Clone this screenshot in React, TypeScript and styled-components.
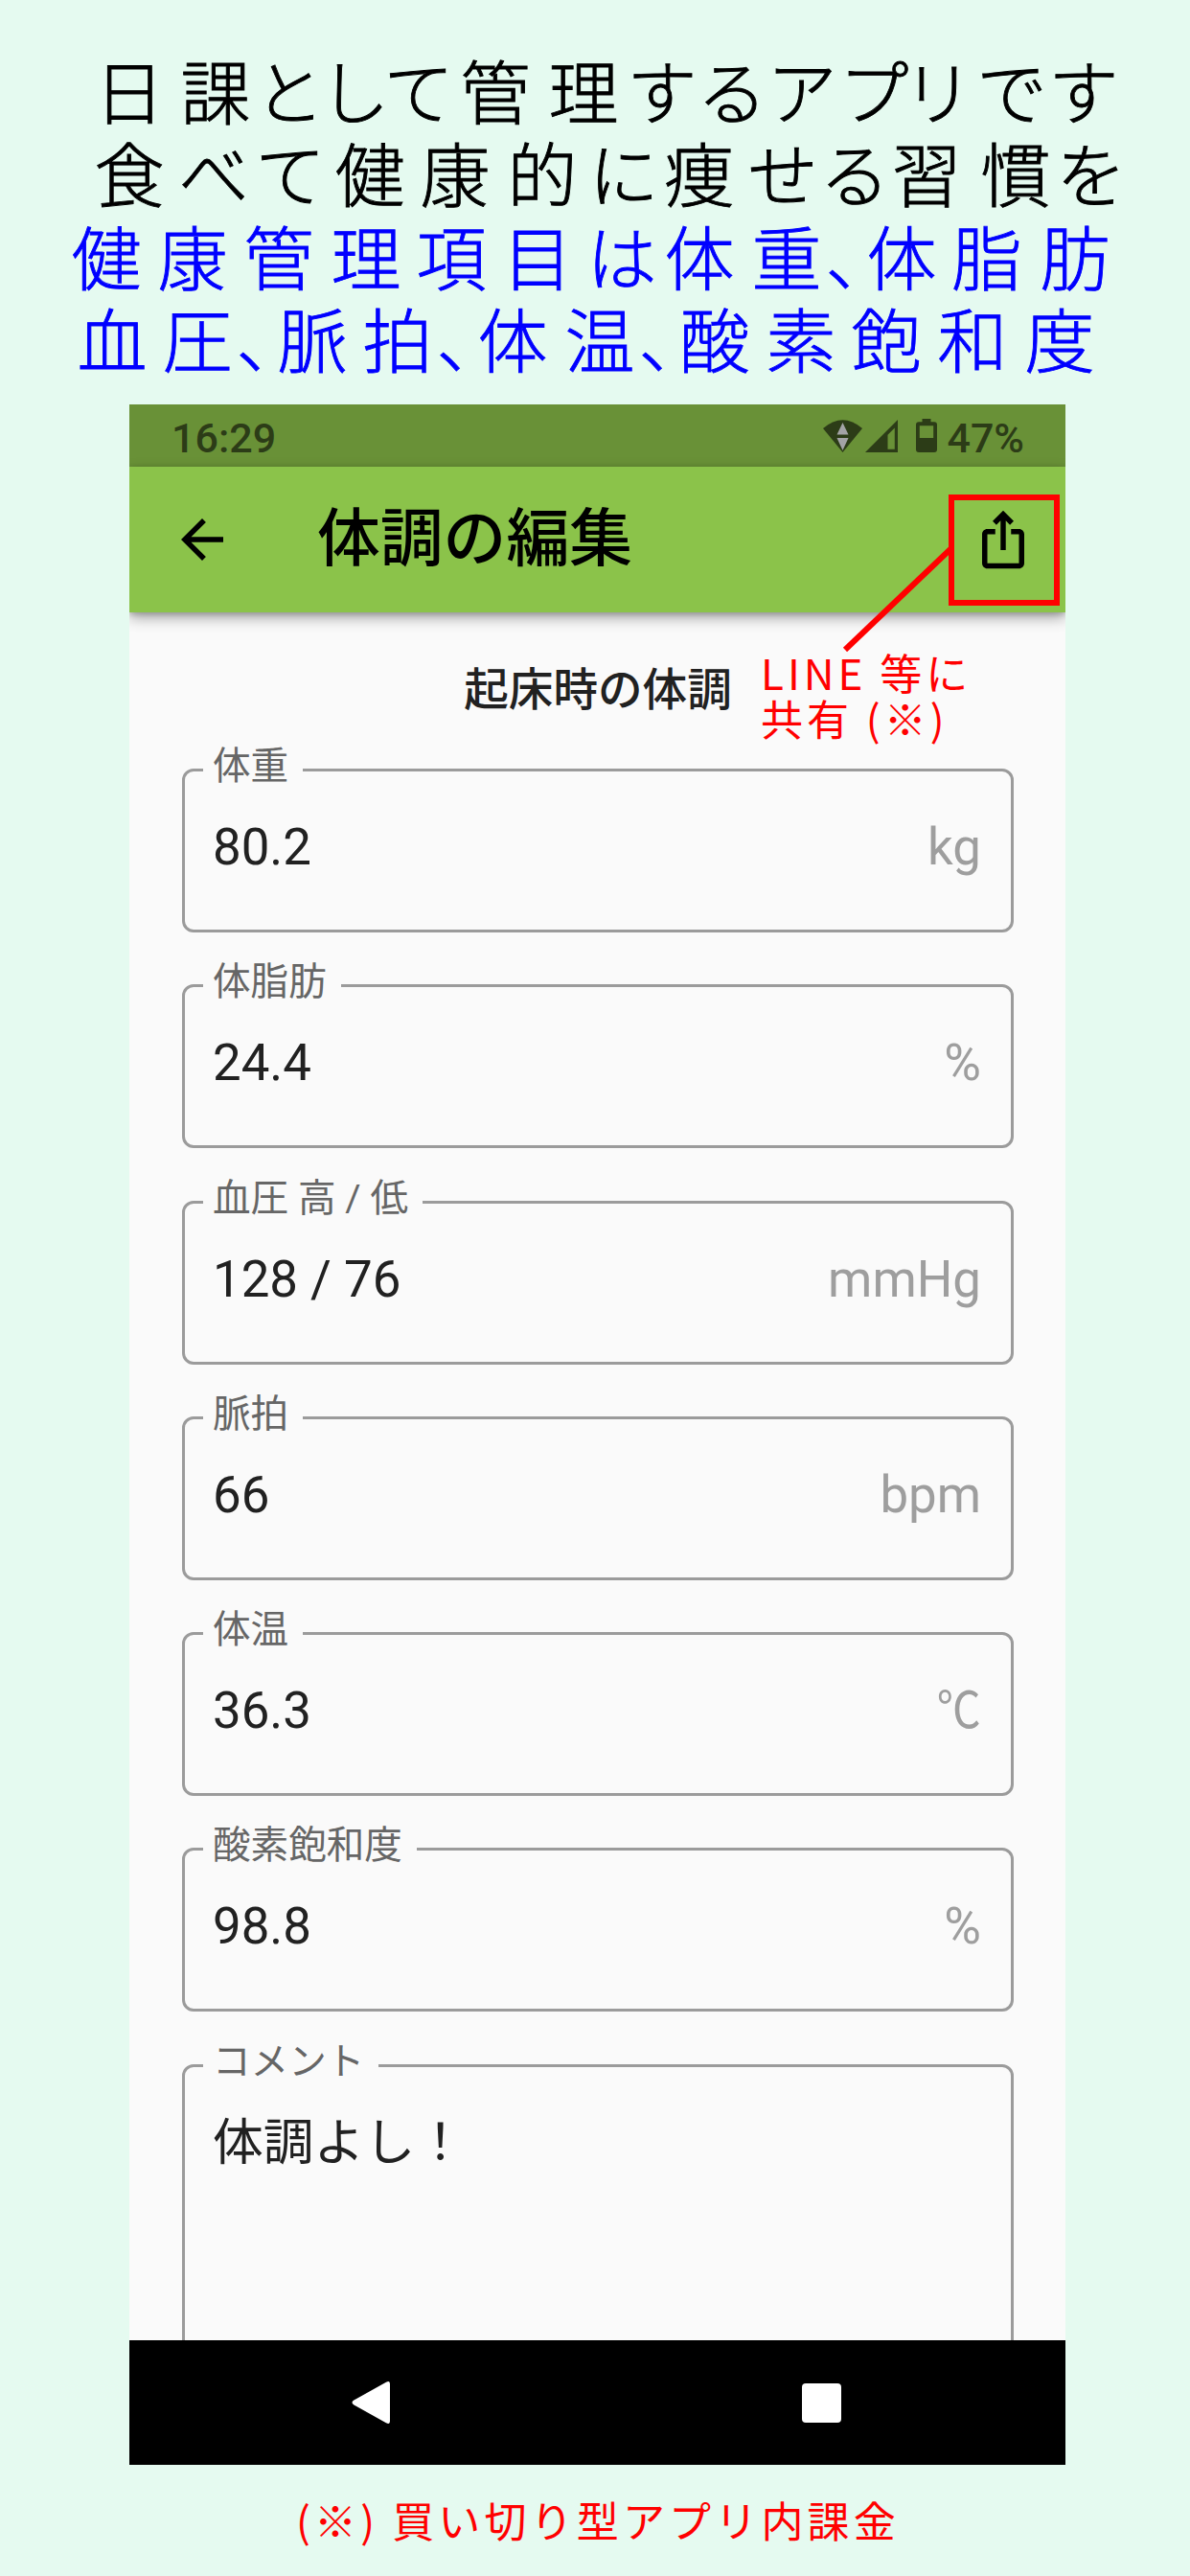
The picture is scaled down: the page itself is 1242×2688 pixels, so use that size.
import React from "react";
import styled, { createGlobalStyle } from "styled-components";

const CJK = '"Noto Sans CJK JP", sans-serif';
const UI = 'Roboto, "Noto Sans CJK JP", sans-serif';

const GlobalStyle = createGlobalStyle`
  * { box-sizing: border-box; }
  body { margin: 0; background: #e5faf0; }
`;

const Page = styled.div`
  width: 1242px;
  height: 2688px;
  overflow: hidden;
  display: flex;
  flex-direction: column;
  background: #e5faf0;
`;

/* ---------- headline ---------- */

const GLYPH = 73;

const Headline = styled.header`
  height: 422px;
  padding-top: 56px;
  flex: none;
`;

const HeadlineRow = styled.p<{ $color: string }>`
  margin: 0;
  height: 86.4px;
  line-height: 86.4px;
  white-space: nowrap;
  font-family: ${UI};
  font-weight: 300;
  font-size: ${GLYPH}px;
  font-feature-settings: "halt";
  color: ${(p) => p.$color};
  -webkit-text-stroke: 0.9px ${(p) => p.$color};
`;

const Glyph = styled.span<{ $gap: number }>`
  margin-left: ${(p) => p.$gap}px;
`;

interface HeadlineLine {
  text: string;
  color: string;
  centers: number[];
}

const HEADLINES: HeadlineLine[] = [
  {
    text: "日課として管理するアプリです",
    color: "#000000",
    centers: [135, 225, 302, 370, 437, 517, 609, 691, 764, 837, 912, 979, 1056, 1131],
  },
  {
    text: "食べて健康的に痩せる習慣を",
    color: "#000000",
    centers: [135, 223, 303, 386, 475, 566, 651, 730, 817, 892, 967, 1060, 1139],
  },
  {
    text: "健康管理項目は体重、体脂肪",
    color: "#0000ff",
    centers: [111, 201, 291, 382, 471, 561, 649, 730, 821, 898, 941, 1030, 1122],
  },
  {
    text: "血圧、脈拍、体温、酸素飽和度",
    color: "#0000ff",
    centers: [117, 206, 283, 326, 415, 492, 535, 626, 703, 746, 836, 925, 1015, 1106],
  },
];

// The comma is set half-width, every other glyph takes a full em.
const advance = (ch: string) => (ch === "、" ? GLYPH / 2 : GLYPH);

function HeadlineText({ text, color, centers }: HeadlineLine) {
  const glyphs = Array.from(text);
  return (
    <HeadlineRow $color={color}>
      {glyphs.map((ch, i) => (
        <Glyph
          key={i}
          $gap={
            i === 0
              ? centers[0] - GLYPH / 2
              : centers[i] - centers[i - 1] - advance(glyphs[i - 1])
          }
        >
          {ch}
        </Glyph>
      ))}
    </HeadlineRow>
  );
}

/* ---------- phone ---------- */

const Phone = styled.main`
  position: relative;
  width: 977px;
  height: 2150px;
  margin-left: 135px;
  flex: none;
  display: flex;
  flex-direction: column;
  background: #fafafa;
  overflow: hidden;
`;

const StatusBar = styled.div`
  height: 65px;
  flex: none;
  padding: 0 43px 0 44px;
  display: flex;
  align-items: center;
  justify-content: space-between;
  background: #699137;
  color: #2c3c17;
  font-family: ${UI};
  font-weight: 500;
  font-size: 43px;
`;

const StatusText = styled.span`
  line-height: 60px;
  padding-top: 4px;
`;

const StatusIcons = styled.div`
  display: flex;
  align-items: center;
`;

const SignalIcon = styled.svg`
  display: block;
  margin: 1px 19px 0 3px;
`;

const BatteryIcon = styled.svg`
  display: block;
  margin-right: 10px;
`;

const AppBar = styled.div`
  height: 152px;
  flex: none;
  display: flex;
  align-items: center;
  padding: 0 32px 0 43px;
  background: #8bc34a;
  box-shadow: 0 6px 14px rgba(0, 0, 0, 0.32), 0 2px 6px rgba(0, 0, 0, 0.2);
  z-index: 1;
`;

const Title = styled.h1`
  flex: 1;
  margin: 0 0 0 87px;
  padding-bottom: 13px;
  line-height: 90px;
  font-family: ${CJK};
  font-weight: 500;
  font-size: 65.8px;
  color: #000;
`;

const Form = styled.section`
  flex: 1;
  min-height: 0;
  overflow: hidden;
  padding: 47px 54px 0 55px;
  display: flex;
  flex-direction: column;
  font-family: ${UI};
`;

const FormHeading = styled.h2`
  margin: 0 0 32px;
  flex: none;
  height: 60px;
  line-height: 60px;
  text-align: center;
  font-family: ${CJK};
  font-weight: 500;
  font-size: 46.6px;
  color: #212121;
`;

const Field = styled.fieldset<{ $height: number }>`
  flex: none;
  min-width: 0;
  height: ${(p) => p.$height}px;
  margin: 0 0 30.3px;
  padding: 24px 31px 0 29px;
  border: 3px solid #9b9b9b;
  border-radius: 12px;
`;

const Label = styled.legend`
  margin-left: -10px;
  padding: 0 15px 7px 10px;
  height: 51px;
  line-height: 44px;
  font-size: 39.6px;
  color: #666;
`;

const ValueRow = styled.div`
  display: flex;
  justify-content: space-between;
  height: 62px;
  line-height: 62px;
  font-size: 52.8px;
`;

const Value = styled.span`
  color: #212121;
`;

const Unit = styled.span<{ $narrow?: boolean }>`
  color: #9e9e9e;
  transform: ${(p) => (p.$narrow ? "scaleX(0.87)" : "none")};
  transform-origin: right center;
`;

const NavBar = styled.nav`
  height: 130px;
  flex: none;
  display: flex;
  align-items: center;
  justify-content: space-between;
  padding: 0 234px 0 232px;
  background: #000;
`;

const RecentsKey = styled.span`
  width: 41px;
  height: 41px;
  border-radius: 4px;
  background: #fff;
`;

/* ---------- callout drawn over the app ---------- */

const Highlight = styled.div`
  position: absolute;
  z-index: 2;
  left: 855px;
  top: 94px;
  width: 116px;
  height: 116px;
  border: 6px solid #f00;
`;

const Leader = styled.svg`
  position: absolute;
  z-index: 2;
  left: 735px;
  top: 140px;
`;

const Callout = styled.p`
  position: absolute;
  z-index: 2;
  left: 659px;
  top: 255px;
  margin: 0;
  line-height: 48px;
  white-space: pre;
  font-family: ${CJK};
  font-size: 44px;
  letter-spacing: 4px;
  color: #f00;
`;

const Footnote = styled.footer`
  margin-top: 25px;
  padding-left: 309px;
  line-height: 64px;
  white-space: nowrap;
  font-family: ${CJK};
  font-size: 44px;
  letter-spacing: 4.15px;
  color: #f00;
`;

interface FieldData {
  label: string;
  value: string;
  unit?: string;
  narrowUnit?: boolean;
  height?: number;
}

const FIELDS: FieldData[] = [
  { label: "体重", value: "80.2", unit: "kg" },
  { label: "体脂肪", value: "24.4", unit: "%" },
  { label: "血圧 高 / 低", value: "128 / 76", unit: "mmHg" },
  { label: "脈拍", value: "66", unit: "bpm" },
  { label: "体温", value: "36.3", unit: "℃", narrowUnit: true },
  { label: "酸素飽和度", value: "98.8", unit: "%" },
  { label: "コメント", value: "体調よし！", height: 400 },
];

export default function App() {
  return (
    <>
      <GlobalStyle />
      <Page>
        <Headline>
          {HEADLINES.map((line) => (
            <HeadlineText key={line.text} {...line} />
          ))}
        </Headline>

        <Phone>
          <StatusBar>
            <StatusText>16:29</StatusText>
            <StatusIcons>
              <svg width="41" height="34" viewBox="0 0 41 34" fill="#2c3c17">
                <path d="M0 9Q20.5-8.5 41 9L20.5 34Z" />
                <path d="M20.5 3l6 12.5h-12zM20.5 32l6-13h-12z" fill="#a3a3a6" />
              </svg>
              <SignalIcon width="34" height="34" viewBox="0 0 34 34" fill="#2c3c17">
                <path
                  fillRule="evenodd"
                  d="M34 0V34H0ZM30.8 8.5L23.5 15.8V30.8H30.8Z"
                />
              </SignalIcon>
              <BatteryIcon width="22" height="35" viewBox="0 0 22 35" fill="#2c3c17">
                <path
                  fillRule="evenodd"
                  d="M6.5 0h9v3.3H19a3 3 0 0 1 3 3V32a3 3 0 0 1-3 3H3a3 3 0 0 1-3-3V6.3a3 3 0 0 1 3-3h3.5zM3.8 7.3V20H18.2V7.3z"
                />
              </BatteryIcon>
              <StatusText>47%</StatusText>
            </StatusIcons>
          </StatusBar>

          <AppBar>
            <svg width="66" height="66" viewBox="0 0 24 24">
              <path d="M20 11H7.830l5.590-5.590L12 4l-8 8 8 8 1.410-1.410L7.830 13H20v-2z" />
            </svg>
            <Title>体調の編集</Title>
            <svg width="66" height="66" viewBox="0 0 24 24">
              <path d="M16 5l-1.420 1.420-1.590-1.590V16h-1.980V4.830L9.420 6.420 8 5l4-4 4 4zm4 5v11c0 1.100-.9 2-2 2H6c-1.110 0-2-.9-2-2V10c0-1.110.89-2 2-2h3v2H6v11h12V10h-3V8h3c1.100 0 2 .89 2 2z" />
            </svg>
          </AppBar>

          <Form>
            <FormHeading>起床時の体調</FormHeading>
            {FIELDS.map((f) => (
              <Field key={f.label} $height={f.height ?? 195}>
                <Label>{f.label}</Label>
                <ValueRow>
                  <Value>{f.value}</Value>
                  {f.unit && <Unit $narrow={f.narrowUnit}>{f.unit}</Unit>}
                </ValueRow>
              </Field>
            ))}
          </Form>

          <NavBar>
            <svg width="40" height="44" viewBox="0 0 40 44" fill="#fff">
              <path d="M36 .8Q40-1.500 40 3V41Q40 45.500 36 43.200L2 24.200Q-1 22 2 19.800Z" />
            </svg>
            <RecentsKey />
          </NavBar>

          <Highlight />
          <Leader width="130" height="130" viewBox="0 0 130 130">
            <line x1="12" y1="116" x2="122" y2="11" stroke="#f00" strokeWidth="6" />
          </Leader>
          <Callout>{"LINE 等に\n共有 (※)"}</Callout>
        </Phone>

        <Footnote>(※) 買い切り型アプリ内課金</Footnote>
      </Page>
    </>
  );
}
